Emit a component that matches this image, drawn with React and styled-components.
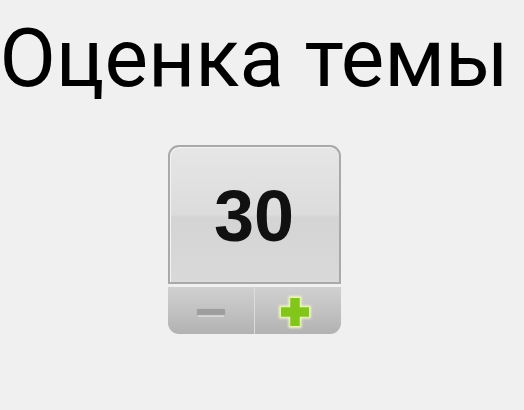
import React from "react";
import styled, { createGlobalStyle } from "styled-components";

const Global = createGlobalStyle`
  html, body { margin: 0; padding: 0; background: #f0f0f0; }
  body { width: 524px; height: 410px; overflow: hidden; }
`;

const Page = styled.div`
  width: 508px;
  display: flex;
  flex-direction: column;
  align-items: center;
  padding-top: 9px;
`;

const Title = styled.h1`
  margin: 0;
  font-family: Roboto, "Noto Sans", sans-serif;
  font-weight: 400;
  font-size: 82px;
  line-height: 98px;
  color: #000;
  white-space: nowrap;
`;

const Widget = styled.div`
  margin-top: 38px;
  width: 173px;
  display: flex;
  flex-direction: column;
  gap: 3px;
`;

const Display = styled.div`
  height: 139px;
  box-sizing: border-box;
  border: 2px solid #a9a9a9;
  border-radius: 11px 11px 0 0;
  background: linear-gradient(#e6e6e6 0%, #dcdcdc 50%, #d4d4d4 52%, #d9d9d9 100%);
  box-shadow: inset 1px 1px 0 #f4f4f4;
  display: flex;
  align-items: center;
  justify-content: center;
`;

const Value = styled.span`
  font-family: "Liberation Sans", Arial, sans-serif;
  font-weight: 700;
  font-size: 72px;
  line-height: 1;
  color: #111;
  margin-top: 2px;
`;

const Controls = styled.div`
  height: 47px;
  display: flex;
  border-radius: 0 0 11px 11px;
  overflow: hidden;
  background: linear-gradient(#d0d0d0 0%, #c2c2c2 50%, #b2b2b2 100%);
`;

const Btn = styled.div`
  flex: 1;
  display: flex;
  align-items: center;
  justify-content: center;
  border-left: ${(p) => (p.$divider ? "1px solid #dcdcdc" : "none")};
`;

const Minus = styled.div`
  width: 28px;
  height: 6px;
  margin-top: 2px;
  background: #9e9e9e;
  border-radius: 1px;
  box-shadow: 0 0 1px #a0a0a0, 0 3px 0 -1px #d6d6d6;
`;

const PlusIcon = styled.svg`
  margin: 2px 5px 0 0;
`;

export default function App() {
  return (
    <>
      <Global />
      <Page>
        <Title>Оценка темы</Title>
        <Widget>
          <Display>
            <Value>30</Value>
          </Display>
          <Controls>
            <Btn>
              <Minus />
            </Btn>
            <Btn $divider>
              <PlusIcon width="36" height="36" viewBox="0 0 36 36">
                <defs>
                  <filter id="g" x="-20%" y="-20%" width="140%" height="140%">
                    <feGaussianBlur stdDeviation="1.1" />
                  </filter>
                </defs>
                <path d="M11.5 2h13v9.5H34v13h-9.5V34h-13v-9.5H2v-13h9.5z" fill="#eefab8" filter="url(#g)" />
                <path d="M13.25 4h9.5v9.25H32v9.5h-9.25V32h-9.5v-9.25H4v-9.5h9.25z" fill="#82c61b" />
              </PlusIcon>
            </Btn>
          </Controls>
        </Widget>
      </Page>
    </>
  );
}
